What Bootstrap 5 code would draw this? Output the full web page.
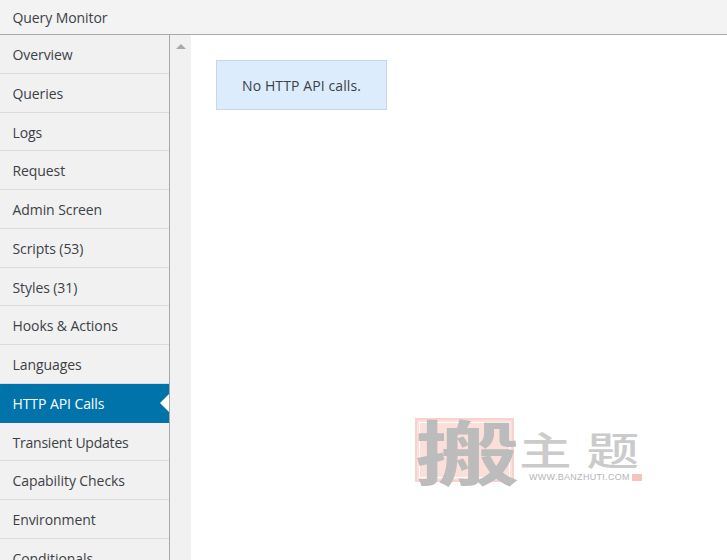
<!doctype html>
<html lang="en"><head><meta charset="utf-8"><title>Query Monitor</title>
<link rel="stylesheet" href="https://cdn.jsdelivr.net/npm/bootstrap@5.3.0/dist/css/bootstrap.min.css">
<style>
html,body{height:560px;overflow:hidden;background:#fff}
body{font-family:"Open Sans","Noto Sans","Liberation Sans",sans-serif;font-size:14px;color:#3c4147;letter-spacing:-.08px}
.qm-title{height:35px;background:#f3f3f3;border-bottom:1px solid #a9a9a9;padding-left:12.5px;line-height:35px}
.qm-body{height:525px}
.qm-side{width:170px;flex:none;background:#f1f1f1;border-right:1px solid #a9a9a9;list-style:none;margin:0;padding:0}
.qm-side li{height:38.77px;line-height:39.1px;padding-left:12.5px;border-bottom:1px solid #dcdcdc;white-space:nowrap;position:relative}
.qm-side li.qm-on{background:#0073aa;color:#fff;border-bottom-color:#0073aa}
.qm-side li.qm-on::after{content:"";position:absolute;right:0;top:10px;border:9px solid transparent;border-left-width:0;border-right:9px solid #fff}
.qm-narrow{letter-spacing:-.22px}
.qm-rail{width:21px;flex:none;background:#f1f1f1;padding:9px 0 0 6px}
.qm-up{width:0;height:0;border:5px solid transparent;border-top-width:0;border-bottom:5px solid #a9a9a9}
.qm-main{padding:25px}
.qm-note{width:171px;height:50px;background:#dcecfc;border:1px solid #c4d8ea;line-height:50px;text-align:center;letter-spacing:.1px}
.qm-mark{position:absolute;left:415px;top:418px;width:230px;height:70px;letter-spacing:0}
.qm-seal{position:absolute;left:0;top:0;width:99px;height:64px;background:#fcdfdb;border:2px solid #f8d2cc;outline:1px solid #fff;outline-offset:-5px}
.qm-seal-t{position:absolute;left:0;top:-10px;width:70px;text-align:center;font:700 70px/84px "Noto Sans CJK SC",sans-serif;color:#bcbcbc;transform:scaleX(1.5);transform-origin:0 50%}
.qm-zt{position:absolute;left:104px;top:10px;font:500 39px/40px "Noto Sans CJK SC",sans-serif;letter-spacing:11px;color:#cbcbcb;white-space:nowrap;transform:scaleX(1.35);transform-origin:0 50%}
.qm-url{position:absolute;left:114px;top:54px;font:9px/11px "Liberation Sans",sans-serif;letter-spacing:.3px;color:#b5b5b5;white-space:nowrap}
.qm-dot{position:absolute;left:217px;top:56px;width:10px;height:7px;background:#f7c4bd}
</style></head>
<body>
<div class="qm-title">Query Monitor</div>
<div class="qm-body d-flex">
<ul class="qm-side">
<li>Overview</li><li>Queries</li><li>Logs</li><li>Request</li><li>Admin Screen</li><li>Scripts (53)</li><li>Styles (31)</li><li>Hooks &amp; Actions</li><li>Languages</li><li class="qm-on">HTTP API Calls</li><li class="qm-narrow">Transient Updates</li><li>Capability Checks</li><li>Environment</li><li>Conditionals</li>
</ul>
<div class="qm-rail"><div class="qm-up"></div></div>
<div class="qm-main flex-grow-1"><div class="qm-note">No HTTP API calls.</div></div>
</div>
<div class="qm-mark"><div class="qm-seal"></div><div class="qm-seal-t">搬</div><div class="qm-zt">主题</div><div class="qm-url">WWW.BANZHUTI.COM</div><div class="qm-dot"></div></div>
<script src="https://cdn.jsdelivr.net/npm/bootstrap@5.3.0/dist/js/bootstrap.bundle.min.js"></script>
</body></html>
